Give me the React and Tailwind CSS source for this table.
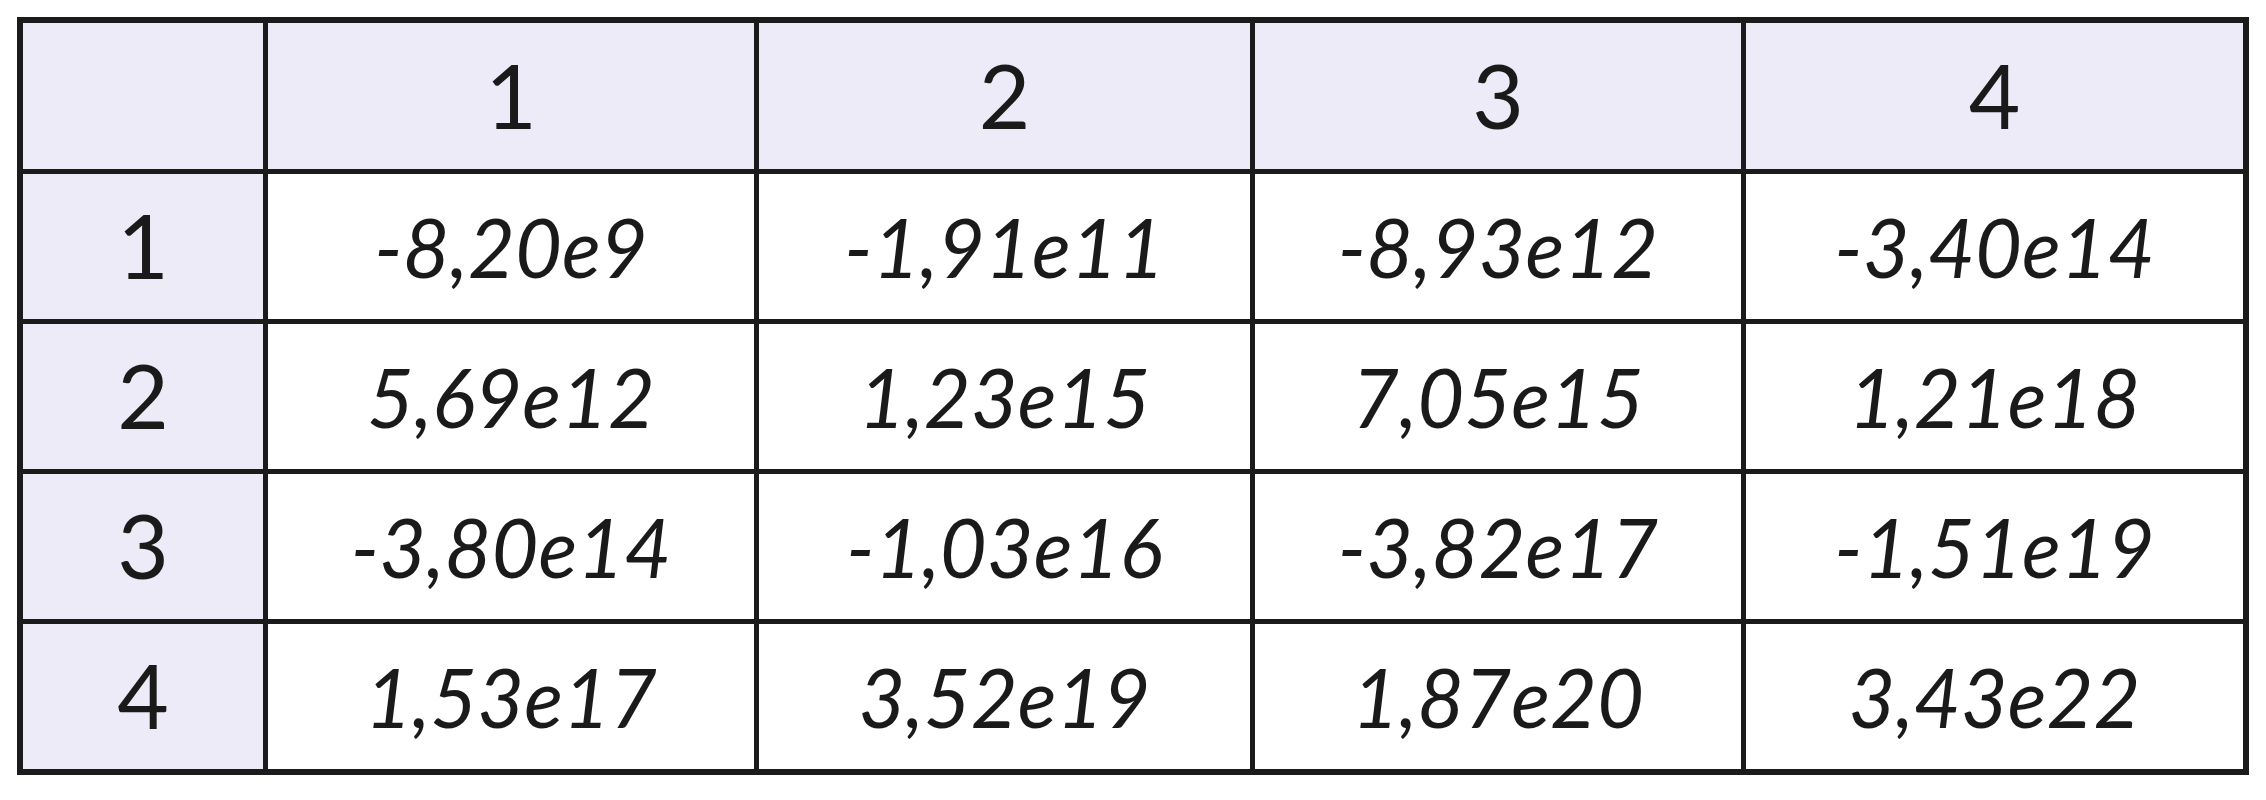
import React from "react";

const header = ["", "1", "2", "3", "4"];
const rows = [
  ["1", "-8,20e9", "-1,91e11", "-8,93e12", "-3,40e14"],
  ["2", "5,69e12", "1,23e15", "7,05e15", "1,21e18"],
  ["3", "-3,80e14", "-1,03e16", "-3,82e17", "-1,51e19"],
  ["4", "1,53e17", "3,52e19", "1,87e20", "3,43e22"],
];

export default function App() {
  return (
    <div className="w-[2266px] h-[800px] bg-white pt-[17px] pl-[17px]" style={{ fontFamily: "Lato, 'Open Sans', sans-serif" }}>
      <div className="inline-grid grid-cols-[240px_486px_491px_486px_497px] grid-rows-[146px_145px_145px_145px_145px] gap-[5px] p-[6px] bg-[#1b1b1b] text-[#1a1a1a]">
        {header.map((h, i) => (
          <div key={"h" + i} className="bg-[#ECEBF7] flex items-center justify-center text-[89px] leading-none pb-[4px]">
            {h}
          </div>
        ))}
        {rows.map((r, ri) => (
          <React.Fragment key={ri}>
            <div className="bg-[#ECEBF7] flex items-center justify-center text-[89px] leading-none pb-[4px]">
              {r[0]}
            </div>
            {r.slice(1).map((v, ci) => (
              <div key={ci} className="bg-white flex items-center justify-center text-[81px] italic leading-none">
                {v}
              </div>
            ))}
          </React.Fragment>
        ))}
      </div>
    </div>
  );
}
